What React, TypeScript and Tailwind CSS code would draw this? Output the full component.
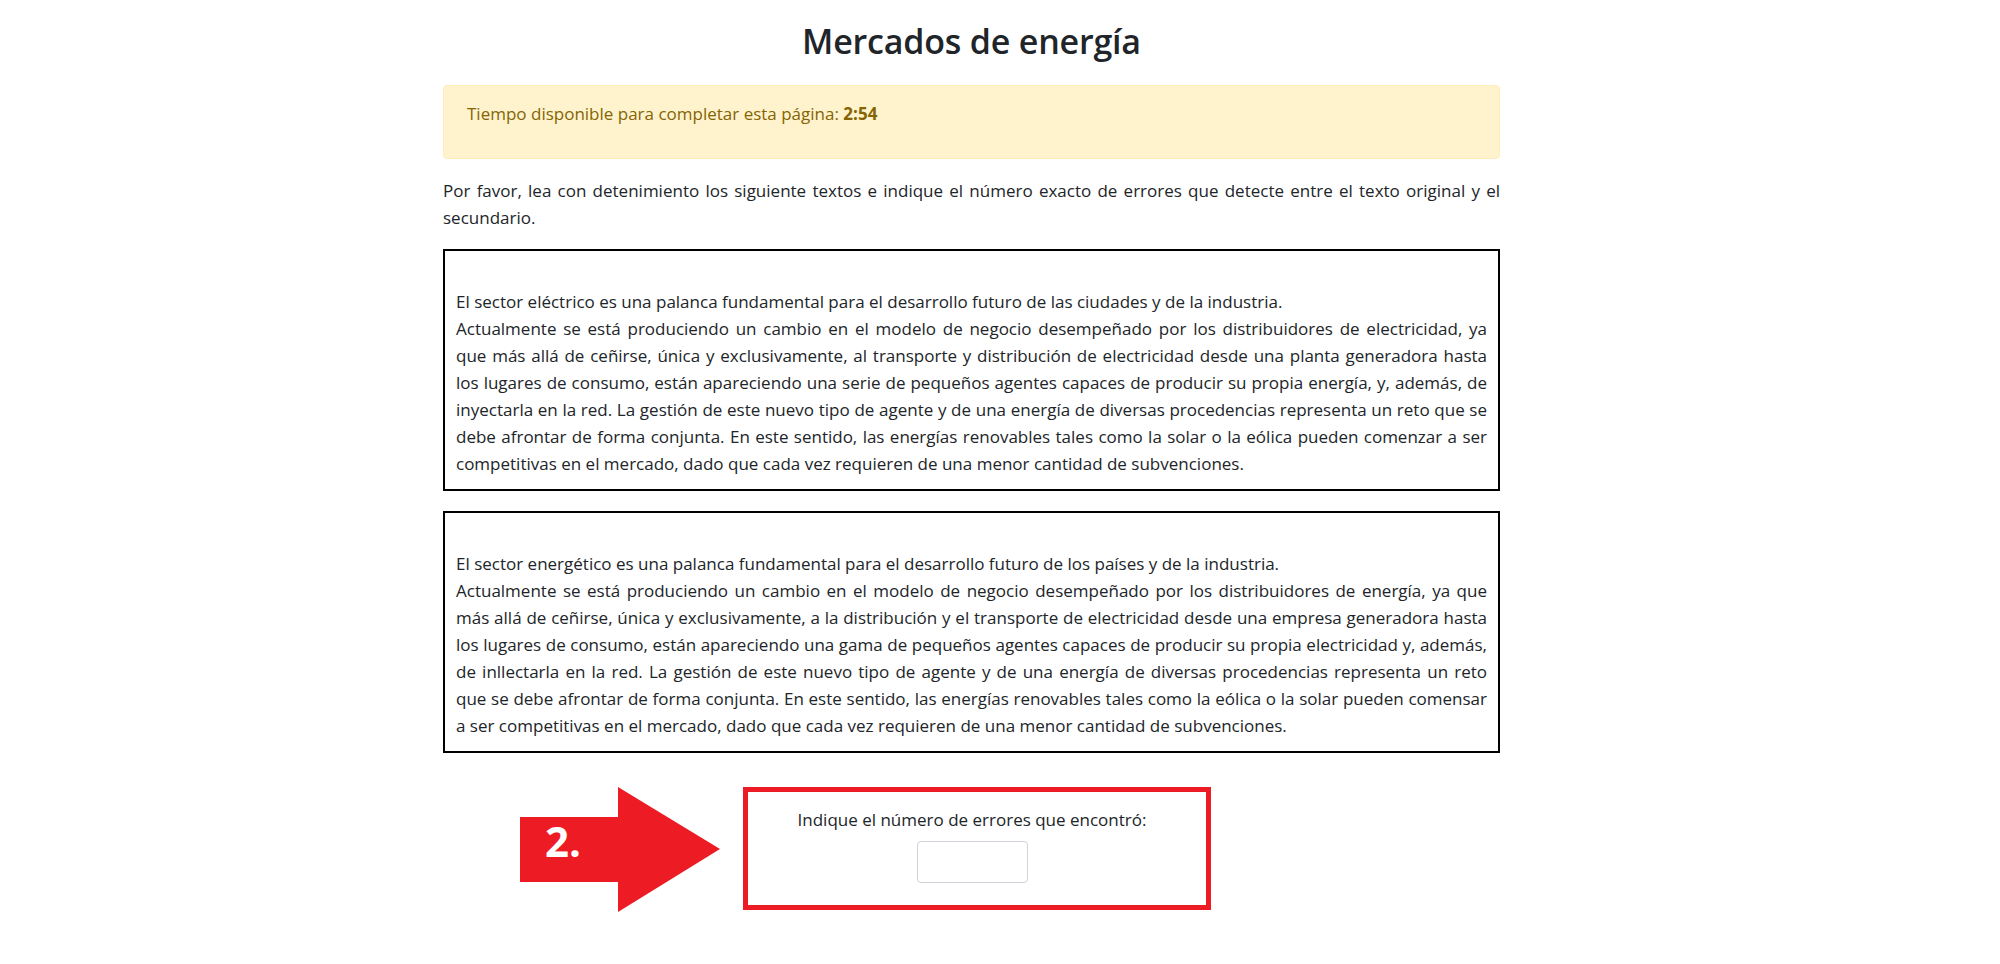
import React from "react";

const box1 = [
  "Actualmente se está produciendo un cambio en el modelo de negocio desempeñado por los distribuidores de electricidad, ya",
  "que más allá de ceñirse, única y exclusivamente, al transporte y distribución de electricidad desde una planta generadora hasta",
  "los lugares de consumo, están apareciendo una serie de pequeños agentes capaces de producir su propia energía, y, además, de",
  "inyectarla en la red. La gestión de este nuevo tipo de agente y de una energía de diversas procedencias representa un reto que se",
  "debe afrontar de forma conjunta. En este sentido, las energías renovables tales como la solar o la eólica pueden comenzar a ser",
];
const box1Last = "competitivas en el mercado, dado que cada vez requieren de una menor cantidad de subvenciones.";
const box1First = "El sector eléctrico es una palanca fundamental para el desarrollo futuro de las ciudades y de la industria.";

const box2 = [
  "Actualmente se está produciendo un cambio en el modelo de negocio desempeñado por los distribuidores de energía, ya que",
  "más allá de ceñirse, única y exclusivamente, a la distribución y el transporte de electricidad desde una empresa generadora hasta",
  "los lugares de consumo, están apareciendo una gama de pequeños agentes capaces de producir su propia electricidad y, además,",
  "de inllectarla en la red. La gestión de este nuevo tipo de agente y de una energía de diversas procedencias representa un reto",
  "que se debe afrontar de forma conjunta. En este sentido, las energías renovables tales como la eólica o la solar pueden comensar",
];
const box2Last = "a ser competitivas en el mercado, dado que cada vez requieren de una menor cantidad de subvenciones.";
const box2First = "El sector energético es una palanca fundamental para el desarrollo futuro de los países y de la industria.";

function TextBox({ first, lines, last }: { first: string; lines: string[]; last: string }) {
  return (
    <div className="border-2 border-black px-[11px] pt-[10px] pb-[12px] h-[242px]">
      <div className="h-[27px]" />
      <div className="block">{first}</div>
      {lines.map((l, i) => (
        <div key={i} className="block text-justify [text-align-last:justify]">
          {l}
        </div>
      ))}
      <div className="block">{last}</div>
    </div>
  );
}

export default function App() {
  return (
    <div
      className="min-h-screen bg-white text-[#212529] text-[17px] leading-[27px]"
      style={{ fontFamily: '"Open Sans", "Noto Sans", sans-serif' }}
    >
      <div className="ml-[443px] w-[1057px] pt-[20px]">
        <h1 className="text-center text-[34px] leading-[42px] font-semibold tracking-[-0.2px]">Mercados de energía</h1>

        <div className="mt-[23px] h-[74px] rounded-[4px] border border-[#ffeeba] bg-[#fff3cd] text-[#856404] pl-[23px] pt-[14px]">
          Tiempo disponible para completar esta página: <b className="font-bold">2:54</b>
        </div>

        <p className="mt-[18px] text-justify">
          Por favor, lea con detenimiento los siguiente textos e indique el número exacto de errores que detecte entre el texto original y el secundario.
        </p>

        <div className="mt-[18px]">
          <TextBox first={box1First} lines={box1} last={box1Last} />
        </div>
        <div className="mt-[20px]">
          <TextBox first={box2First} lines={box2} last={box2Last} />
        </div>

        <div className="mt-[34px] flex items-start pl-[77px] gap-[23px]">
          <div className="relative w-[200px] h-[125px] shrink-0">
            <svg width="200" height="125" viewBox="0 0 200 125" className="block">
              <polygon points="0,30 98,30 98,0 200,62 98,125 98,95 0,95" fill="#ed1c24" />
            </svg>
            <span className="absolute left-[25px] top-[26px] text-white text-[42px] leading-[56px] font-bold">2.</span>
          </div>
          <div className="w-[468px] h-[123px] border-[5px] border-[#ed1c24] flex flex-col items-center pt-[14px] pr-[10px]">
            <div>Indique el número de errores que encontró:</div>
            <input
              type="text"
              className="mt-[8px] w-[111px] h-[42px] rounded-[4px] border border-[#ced4da] bg-white outline-none"
            />
          </div>
        </div>
      </div>
    </div>
  );
}
